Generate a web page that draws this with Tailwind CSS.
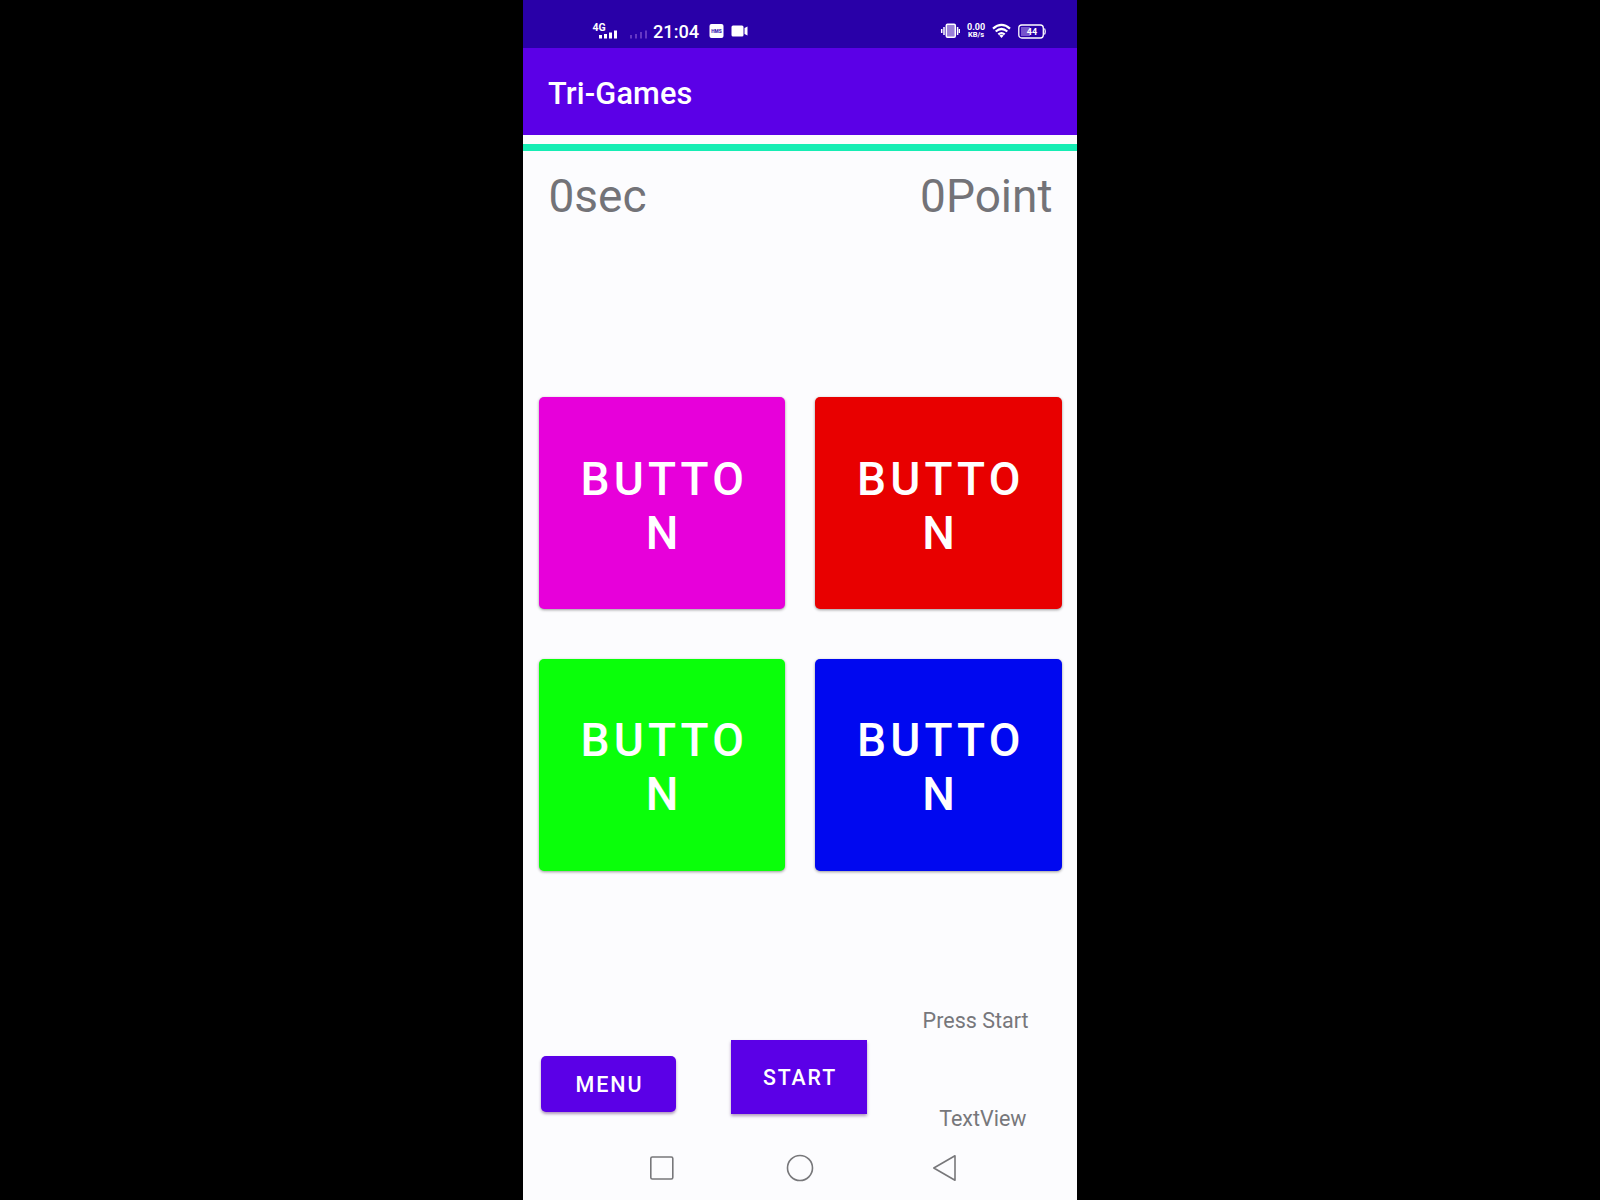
<!DOCTYPE html>
<html lang="en">
<head>
<meta charset="utf-8">
<title>Tri-Games</title>
<script src="https://cdn.jsdelivr.net/npm/@tailwindcss/browser@4"></script>
</head>
<body class="bg-black font-['Roboto',sans-serif]">
<main class="ml-[523px] flex h-[1200px] w-[554px] flex-col overflow-hidden bg-[#fcfcfe]">
  <!-- status bar -->
  <div class="flex h-12 shrink-0 items-start justify-between bg-[#2900a8] pl-[69px] pr-[31px] pt-[22px] text-white">
    <div class="flex items-start">
      <svg class="h-[18px] w-[58px]" viewBox="0 0 58 18" fill="#fff">
        <text x="0.5" y="9" font-size="10.5" font-weight="700" font-family="Roboto">4G</text>
        <path d="M7 13h3v3.500h-3zM12 12h3v4.500h-3zM17 10.500h3v6h-3zM22 8.500h3v8h-3z"/>
        <path fill="#6537c4" d="M38 13h2v3.500h-2zM43 12h2v4.500h-2zM48 10h2v6.500h-2zM53 8.500h2v8h-2z"/>
      </svg>
      <span class="ml-[3px] w-[51px] text-[18.200px] font-medium leading-[20px]">21:04</span>
      <svg class="ml-[5px] h-[18px] w-[40px]" viewBox="0 0 40 18" fill="#fff">
        <rect x="0.500" y="2" width="14" height="14" rx="2"/>
        <text x="7.500" y="10.700" text-anchor="middle" font-size="4.800" font-weight="900" fill="#4420b4" font-family="Roboto">HMS</text>
        <rect x="22.500" y="3.500" width="12" height="11" rx="1.500"/>
        <path d="M35.500 6l3-1.500v9l-3-1.500z"/>
      </svg>
    </div>
    <div class="flex items-start">
      <svg class="h-[18px] w-[20px]" viewBox="0 0 20 18" fill="none" stroke="#fff" stroke-width="1.500">
        <rect x="6.300" y="2.200" width="9" height="13" rx="1.200" fill="#9a80d8"/>
        <path d="M4 5v8M17.600 5v8M1.700 7v4M19.500 7v4"/>
      </svg>
      <div class="ml-[7px] mt-[1px] w-[18px] whitespace-nowrap text-center text-[8px] font-bold leading-[8px]"><div class="text-[9px]">0.00</div><div class="text-[7.500px]">KB/s</div></div>
      <svg class="ml-[7px] h-[18px] w-[19px]" viewBox="0 0 19 18" fill="none" stroke="#fff" stroke-width="2.200">
        <path d="M1 6.600Q9.500-.8 18 6.600M3.700 9.500Q9.500 4.500 15.300 9.500M6.300 12.300Q9.500 9.800 12.700 12.300"/>
        <path d="M7.300 13.500Q9.500 12 11.700 13.500L9.500 16z" fill="#fff" stroke="none"/>
      </svg>
      <svg class="ml-[7px] h-[18px] w-[28px]" viewBox="0 0 28 18">
        <rect x=".8" y="3" width="24.500" height="13" rx="3" fill="none" stroke="#fff" stroke-width="1.300"/>
        <rect x="3" y="5" width="9" height="9" fill="#7654cc"/>
        <path d="M26.500 6.500q1.500 3 0 6" stroke="#fff" stroke-width="1.200" fill="none"/>
        <text x="14" y="12.600" text-anchor="middle" font-size="9" font-weight="700" fill="#fff" font-family="Roboto">44</text>
      </svg>
    </div>
  </div>
  <!-- app bar -->
  <header class="flex h-[87px] shrink-0 items-center bg-[#5b00e7] pl-[25px] pt-[5px] text-[30.700px] font-medium tracking-[0.150px] text-white">Tri-Games</header>
  <div class="mt-[9px] h-[7px] shrink-0 bg-[#16edb4]"></div>
  <div class="mt-[18px] flex h-[54px] shrink-0 items-center justify-between pl-[25.500px] pr-[24.500px] text-[46px] leading-[54px] text-[#737378]"><span>0sec</span><span>0Point</span></div>
  <!-- game buttons -->
  <div class="mt-[174px] grid shrink-0 grid-cols-2 gap-x-[30px] gap-y-[49.500px] px-[15.500px]">
    <button class="h-[212px] rounded-[5px] bg-[#e700da] pl-[5px] pt-[5px] text-[46px] font-medium leading-[54px] tracking-[4.200px] text-white shadow-[0_1px_3px_rgba(0,0,0,0.4)]">BUTTO<br>N</button>
    <button class="h-[212px] rounded-[5px] bg-[#e80000] pl-[5px] pt-[5px] text-[46px] font-medium leading-[54px] tracking-[4.200px] text-white shadow-[0_1px_3px_rgba(0,0,0,0.4)]">BUTTO<br>N</button>
    <button class="h-[212px] rounded-[5px] bg-[#0aff0a] pl-[5px] pt-[5px] text-[46px] font-medium leading-[54px] tracking-[4.200px] text-white shadow-[0_1px_3px_rgba(0,0,0,0.4)]">BUTTO<br>N</button>
    <button class="h-[212px] rounded-[5px] bg-[#0008f0] pl-[5px] pt-[5px] text-[46px] font-medium leading-[54px] tracking-[4.200px] text-white shadow-[0_1px_3px_rgba(0,0,0,0.4)]">BUTTO<br>N</button>
  </div>
  <!-- controls -->
  <div class="mt-[137px] flex h-[128px] shrink-0 items-start pl-[18px]">
    <button class="mt-[48.500px] h-[56px] w-[135px] rounded-[5px] bg-[#5b00e7] pl-[2px] pt-[2px] text-[21.500px] font-medium tracking-[1.900px] text-white shadow-[0_2px_3px_rgba(60,0,90,0.4)]">MENU</button>
    <button class="ml-[55px] mt-[32px] h-[74px] w-[136px] bg-[#5b00e7] pl-[2px] pt-[2px] text-[21.300px] font-medium tracking-[1.900px] text-white shadow-[0_2px_3px_rgba(60,0,90,0.4)]">START</button>
    <div class="flex h-full w-[161.500px] flex-col items-end justify-between pb-[4px] pt-[0.500px] text-[21.500px] leading-[26px] text-[#77777b]"><span>Press Start</span><span class="pr-[2px]">TextView</span></div>
  </div>
  <!-- navigation bar -->
  <nav class="mt-[18px] flex h-[28px] shrink-0 items-center pl-[125px]">
    <svg class="size-[28px]" viewBox="0 0 28 28" fill="none" stroke="#77777a" stroke-width="1.600"><rect x="2.800" y="3" width="22" height="22" rx="1.500"/></svg>
    <svg class="ml-[110px] size-[28px]" viewBox="0 0 28 28" fill="none" stroke="#77777a" stroke-width="1.600"><circle cx="14" cy="14" r="12.500"/></svg>
    <svg class="ml-[117px] size-[28px]" viewBox="0 0 28 28" fill="none" stroke="#77777a" stroke-width="1.600" stroke-linejoin="round"><path d="M24 1.800V26.200L2.800 14z"/></svg>
  </nav>
</main>
</body>
</html>
